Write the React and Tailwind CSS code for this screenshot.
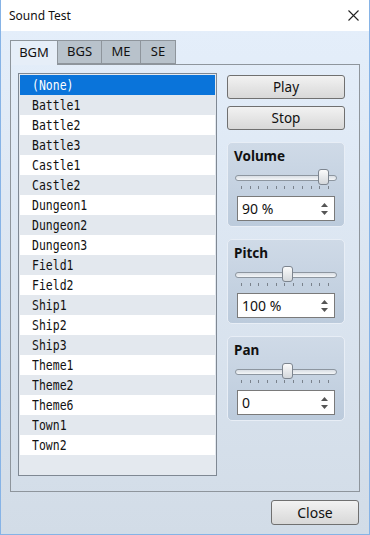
import React from 'react';

const tracks = [
    '(None)', 'Battle1', 'Battle2', 'Battle3', 'Castle1', 'Castle2',
    'Dungeon1', 'Dungeon2', 'Dungeon3', 'Field1', 'Field2',
    'Ship1', 'Ship2', 'Ship3', 'Theme1', 'Theme2', 'Theme6', 'Town1', 'Town2',
];

const uiFont = { fontFamily: '"Noto Sans", "Open Sans", sans-serif' };

const Button = ({ label, className }) => (
    <button
        className={`flex items-center justify-center rounded-[3px] border border-[#707070] bg-gradient-to-b from-[#f2f2f2] to-[#d8d8d8] text-[#111] ${className}`}
        style={uiFont}
    >
        {label}
    </button>
);

const Slider = ({ pos }) => (
    <div className="relative h-[22px] -mx-[2px]">
        {/* track */}
        <div className="absolute left-0 right-0 top-[6px] h-[6px] rounded-full border border-[#8d96a0] bg-gradient-to-b from-[#d9dee4] to-[#f4f6f8]" />
        {/* ticks */}
        <div className="absolute left-[6px] right-[8px] top-[17px] flex justify-between">
            {Array.from({ length: 11 }).map((_, i) => (
                <div key={i} className="h-[3px] w-px bg-[#7a828c]" />
            ))}
        </div>
        {/* thumb */}
        <div
            className="absolute top-[0px] h-[16px] w-[11px] rounded-[3px] border border-[#7d858f] bg-gradient-to-b from-[#fbfbfb] to-[#d4d8dc]"
            style={{ left: pos }}
        />
    </div>
);

const SpinBox = ({ value }) => (
    <div className="flex h-[25px] items-center justify-between border border-[#7a7a7a] bg-white pl-[4px] pr-[6px]">
        <span className="text-[14px] text-[#111]" style={uiFont}>{value}</span>
        <div className="flex flex-col gap-[4px]">
            <svg width="7" height="4" viewBox="0 0 7 4"><path d="M0 4 L3.5 0 L7 4 Z" fill="#555" /></svg>
            <svg width="7" height="4" viewBox="0 0 7 4"><path d="M0 0 L3.5 4 L7 0 Z" fill="#555" /></svg>
        </div>
    </div>
);

const Group = ({ title, value, pos }) => (
    <div className="flex h-[85px] flex-col rounded-[5px] border border-[#e8eef6] bg-gradient-to-b from-[#cfdae7] to-[#bccbdc] px-[9px] pt-[4px]">
        <div className="-ml-[3px] text-[13.5px] font-bold leading-[19px] text-[#111]" style={uiFont}>{title}</div>
        <div className="mt-[3px]">
            <Slider pos={pos} />
        </div>
        <div className="mt-[5px]">
            <SpinBox value={value} />
        </div>
    </div>
);

export default function App() {
    return (
        <div className="flex h-[535px] w-[370px] flex-col overflow-hidden border-x border-b border-[#86b3e6]">
            {/* Title bar */}
            <div className="flex h-[31px] shrink-0 items-center justify-between bg-white pl-[8px] pr-[10px]">
                <span className="text-[12px] text-[#111]" style={uiFont}>Sound Test</span>
                <svg width="11" height="11" viewBox="0 0 11 11">
                    <path d="M0.5 0.5 L10.5 10.5 M10.5 0.5 L0.5 10.5" stroke="#222" strokeWidth="1.1" />
                </svg>
            </div>

            {/* Body */}
            <div className="flex flex-1 flex-col bg-gradient-to-b from-[#e4eefa] to-[#d2dce7] px-[9px] pt-[9px]">
                {/* Tabs */}
                <div className="flex h-[24px] items-end text-[13px]" style={uiFont}>
                    <div className="z-10 -mb-px flex h-[25px] w-[48px] items-center justify-center border border-b-0 border-[#8e959c] bg-[#e6eef8] pb-[1px] text-[#111]">BGM</div>
                    <div className="flex h-[24px] w-[44px] items-center justify-center border border-l-0 border-[#8e959c] bg-[#b8c2cb] text-[#111]">BGS</div>
                    <div className="flex h-[24px] w-[39px] items-center justify-center border border-l-0 border-[#8e959c] bg-[#b8c2cb] text-[#111]">ME</div>
                    <div className="flex h-[24px] w-[35px] items-center justify-center border border-l-0 border-[#8e959c] bg-[#b8c2cb] text-[#111]">SE</div>
                </div>

                {/* Tab panel */}
                <div className="flex h-[428px] gap-[10px] border border-[#8e959c] pl-[7px] pr-[14px] pt-[8px]">
                    {/* Track list */}
                    <div className="flex h-[403px] w-[201px] flex-col border border-[#7f8893] bg-[#e4e9ef] px-px pt-px">
                        {tracks.map((t, i) => (
                            <div
                                key={t}
                                className={`flex h-[20px] shrink-0 items-center pl-[12px] ${
                                    i === 0
                                        ? 'bg-[#0a74da] text-white'
                                        : i % 2 === 1
                                        ? 'bg-[#e3e8ee] text-[#111]'
                                        : 'bg-white text-[#111]'
                                }`}
                            >
                                <span
                                    className="inline-block origin-left scale-x-[0.85] whitespace-nowrap text-[13.5px] leading-[20px]"
                                    style={{ fontFamily: '"DejaVu Sans Mono", monospace' }}
                                >
                                    {t}
                                </span>
                            </div>
                        ))}
                    </div>

                    {/* Controls */}
                    <div className="flex w-[118px] flex-col pt-[2px]">
                        <Button label="Play" className="h-[24px] w-[118px] text-[13.5px]" />
                        <Button label="Stop" className="mt-[7px] h-[24px] w-[118px] text-[13.5px]" />
                        <div className="mt-[12px] flex flex-col gap-[12px]">
                            <Group title="Volume" value="90 %" pos={83} />
                            <Group title="Pitch" value="100 %" pos={47} />
                            <Group title="Pan" value="0" pos={47} />
                        </div>
                    </div>
                </div>

                {/* Footer */}
                <div className="flex justify-end pt-[8px] pr-px">
                    <Button label="Close" className="h-[25px] w-[88px] text-[14px]" />
                </div>
            </div>
        </div>
    );
}
